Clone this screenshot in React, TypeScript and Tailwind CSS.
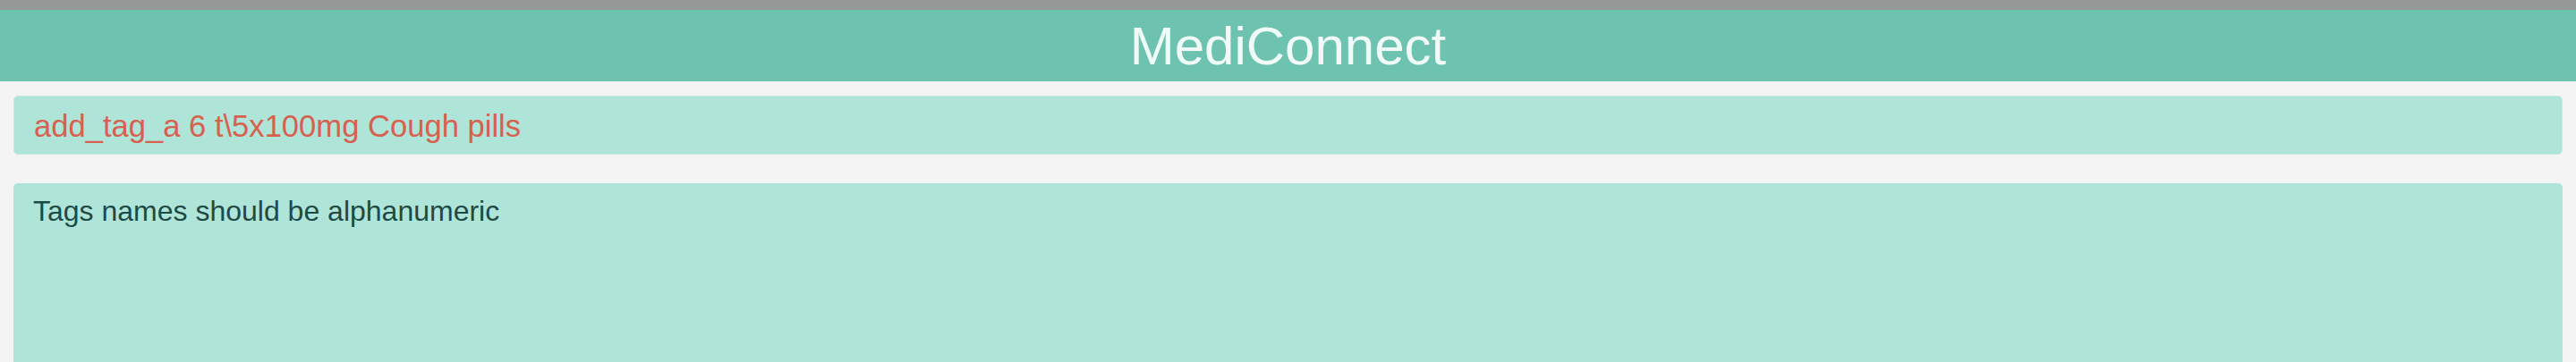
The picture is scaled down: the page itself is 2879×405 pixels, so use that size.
import React from 'react';

const App: React.FC = () => {
  return (
    <div className="min-h-screen bg-[#f4f4f4] font-['Liberation_Sans',Arial,sans-serif]">
      <header>
        <div className="h-[11px] bg-[#959998]" />
        <div className="h-[80px] bg-[#6dc3b0] pt-[11px] text-center">
          <h1 className="text-[60px] leading-[60px] text-[#f0faf7]">MediConnect</h1>
        </div>
      </header>

      <main className="px-[15px] pt-[16px]">
        <div className="rounded-[5px] border border-[#c4ece2] bg-[#afe5d8] px-[22px] pt-[13px] pb-[11px]">
          <p className="text-[34.6px] leading-[40px] text-[#d7604f]">add_tag_a 6 t\5x100mg Cough pills</p>
        </div>

        <div className="mt-[32px] h-[220px] rounded-[5px] bg-[#afe5d8] px-[22px] pt-[13px]">
          <p className="text-[32px] leading-[36px] text-[#1e4a45]">Tags names should be alphanumeric</p>
        </div>
      </main>
    </div>
  );
};

export default App;
